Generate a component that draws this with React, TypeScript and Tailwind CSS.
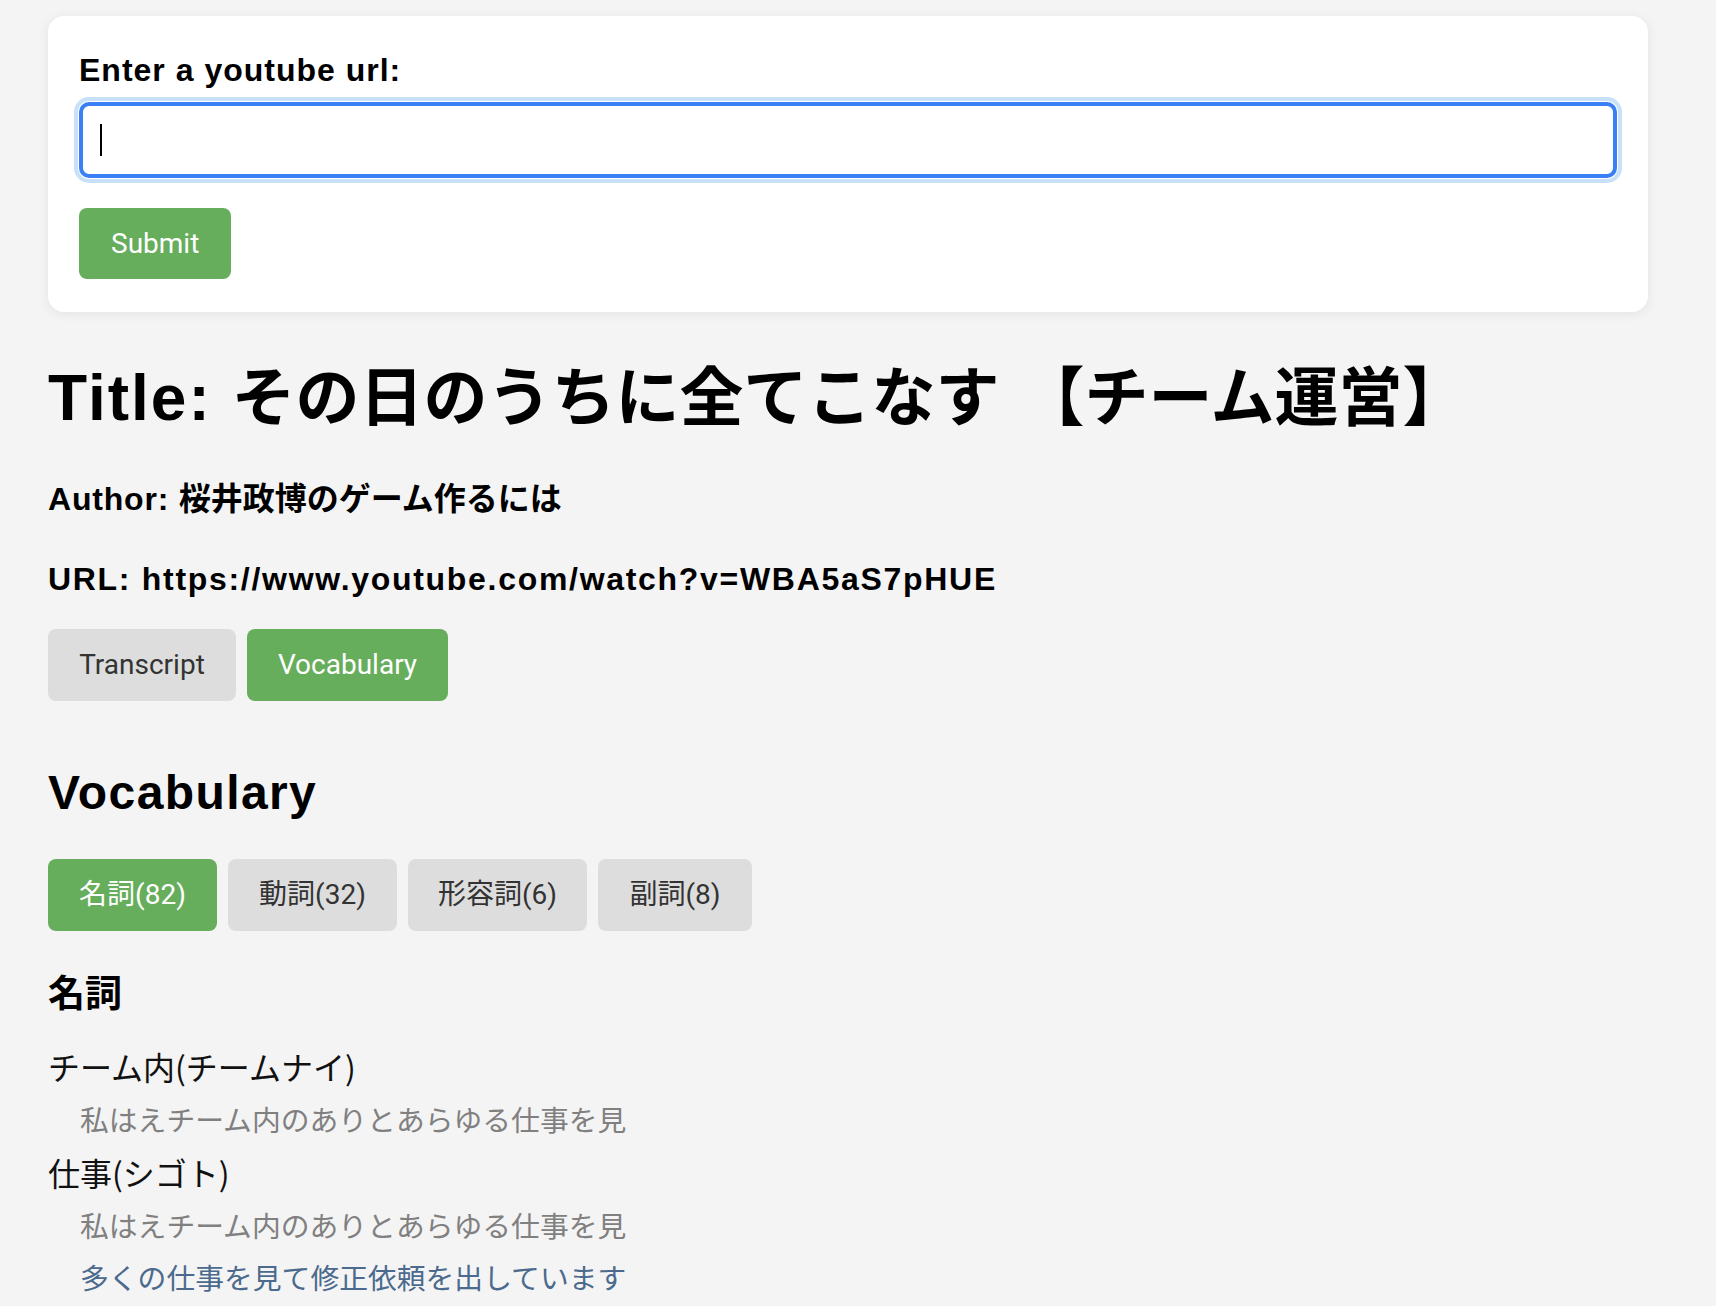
import React from "react";

const latin = { fontFamily: '"Liberation Sans", "Noto Sans CJK JP", sans-serif' };
const ui = { fontFamily: 'Roboto, "Liberation Sans", "Noto Sans CJK JP", sans-serif' };
const jp = { fontFamily: '"Noto Sans CJK JP", "Liberation Sans", sans-serif' };

const pos = [
  { label: "名詞(82)", active: true, w: "w-[169px]" },
  { label: "動詞(32)", active: false, w: "w-[169px]" },
  { label: "形容詞(6)", active: false, w: "w-[179px]" },
  { label: "副詞(8)", active: false, w: "w-[154px]" },
];

const words = [
  {
    word: "チーム内(チームナイ)",
    examples: [{ text: "私はえチーム内のありとあらゆる仕事を見", blue: false }],
  },
  {
    word: "仕事(シゴト)",
    examples: [
      { text: "私はえチーム内のありとあらゆる仕事を見", blue: false },
      { text: "多くの仕事を見て修正依頼を出しています", blue: true },
    ],
  },
];

export default function App() {
  return (
    <div className="min-h-[1306px] bg-[#f4f4f4] text-black" style={latin}>
      <div className="w-[1600px] ml-[48px] pt-[16px]">
        {/* URL card */}
        <div className="bg-white rounded-[16px] shadow-[0_2px_12px_rgba(0,0,0,0.07)] px-[31px] pt-[35px] pb-[33px]">
          <label className="block text-[32px] leading-[38px] font-bold tracking-[1px] mb-[13px]">
            Enter a youtube url:
          </label>
          <div className="relative h-[76px] border-[4px] border-[#3a7ff6] rounded-[10px] bg-white shadow-[0_0_0_1px_#ffffff,0_0_0_5px_#c8e1f9]">
            <input
              type="text"
              className="w-full h-full px-[17px] text-[32px] outline-none bg-transparent"
              aria-label="youtube url"
            />
            <span className="absolute left-[17px] top-[18px] w-[2px] h-[32px] bg-black" />
          </div>
          <button
            className="mt-[30px] h-[71px] px-[32px] bg-[#66ad5c] text-white text-[28px] rounded-[8px]"
            style={ui}
          >
            Submit
          </button>
        </div>

        {/* Title */}
        <h1 className="mt-[49px] text-[64px] leading-[74px] font-bold whitespace-nowrap">
          <span className="tracking-[2px]">Title: </span>
          その日のうちに全てこなす
          <span className="ml-[21px]">【チーム運営】</span>
        </h1>
        <p className="mt-[45px] text-[32px] leading-[38px] font-bold">
          <span className="tracking-[0.8px]">Author: </span>桜井政博のゲーム作るには
        </p>
        <p className="mt-[42px] text-[32px] leading-[38px] font-bold tracking-[1.7px]">
          URL: https://www.youtube.com/watch?v=WBA5aS7pHUE
        </p>

        {/* Tabs */}
        <div className="mt-[31px] flex gap-[11px]">
          <button
            className="h-[72px] w-[188px] bg-[#dddddd] text-[#333333] text-[28px] rounded-[8px]"
            style={ui}
          >
            Transcript
          </button>
          <button
            className="h-[72px] w-[201px] bg-[#66ad5c] text-white text-[28px] rounded-[8px]"
            style={ui}
          >
            Vocabulary
          </button>
        </div>

        <h2 className="mt-[64px] text-[48px] leading-[56px] font-bold tracking-[1.4px]">Vocabulary</h2>

        <div className="mt-[38px] flex gap-[11px]">
          {pos.map((p) =>
            p.active ? (
              <button
                key={p.label}
                className={`${p.w} h-[72px] bg-[#66ad5c] text-white text-[28px] rounded-[8px]`}
                style={ui}
              >
                {p.label}
              </button>
            ) : (
              <button
                key={p.label}
                className={`${p.w} h-[72px] bg-[#dddddd] text-[#333333] text-[28px] rounded-[8px]`}
                style={ui}
              >
                {p.label}
              </button>
            )
          )}
        </div>

        <h3 className="mt-[38px] mb-[32px] text-[37px] leading-[44px] font-bold" style={jp}>
          名詞
        </h3>

        <div className="flex flex-col gap-[6px]">
          {words.map((w) => (
            <div key={w.word}>
              <div className="text-[32px] leading-[42px] mb-[6px] text-[#111111]" style={jp}>
                {w.word}
              </div>
              {w.examples.map((e, i) =>
                e.blue ? (
                  <div key={i} className="pl-[32px] text-[28.8px] leading-[52px] text-[#4b6a8d]" style={jp}>
                    {e.text}
                  </div>
                ) : (
                  <div key={i} className="pl-[32px] text-[28.8px] leading-[52px] text-[#808080]" style={jp}>
                    {e.text}
                  </div>
                )
              )}
            </div>
          ))}
        </div>
      </div>
    </div>
  );
}
